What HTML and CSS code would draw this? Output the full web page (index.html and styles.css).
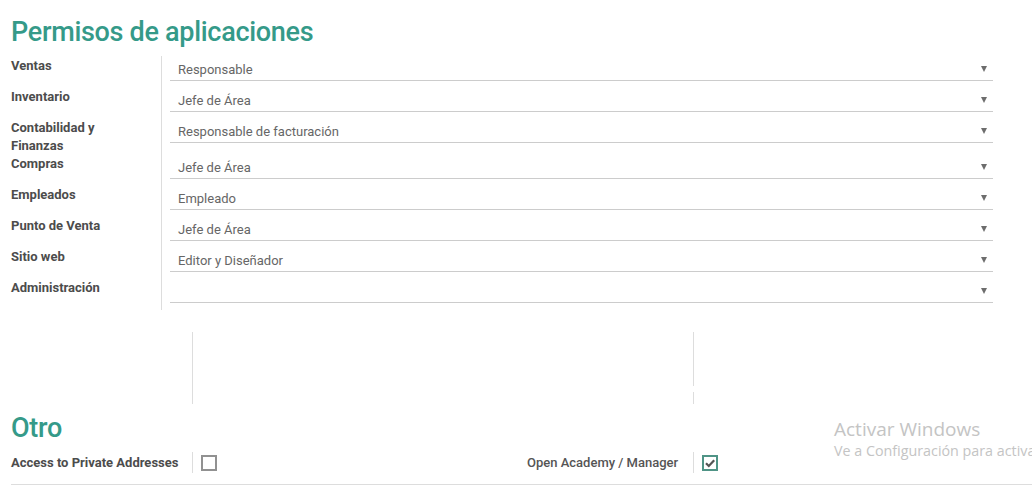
FILE: index.html
```html
<!DOCTYPE html>
<html lang="es">
<head>
<meta charset="utf-8">
<title>Permisos de aplicaciones</title>
<link rel="stylesheet" href="styles.css">
</head>
<body>
<div class="sheet">
  <h1 class="section-title">Permisos de aplicaciones</h1>
  <div class="perm-table">
    <div class="perm-label">Ventas</div>
    <div class="perm-field"><div class="select">Responsable</div></div>
    <div class="perm-label">Inventario</div>
    <div class="perm-field"><div class="select">Jefe de Área</div></div>
    <div class="perm-label">Contabilidad y Finanzas</div>
    <div class="perm-field"><div class="select">Responsable de facturación</div></div>
    <div class="perm-label">Compras</div>
    <div class="perm-field"><div class="select">Jefe de Área</div></div>
    <div class="perm-label">Empleados</div>
    <div class="perm-field"><div class="select">Empleado</div></div>
    <div class="perm-label">Punto de Venta</div>
    <div class="perm-field"><div class="select">Jefe de Área</div></div>
    <div class="perm-label">Sitio web</div>
    <div class="perm-field"><div class="select">Editor y Diseñador</div></div>
    <div class="perm-label">Administración</div>
    <div class="perm-field"><div class="select"></div></div>
  </div>

  <div class="groups empty-groups">
    <div class="group group-left">
      <div class="g-label tall"></div>
    </div>
    <div class="group group-right">
      <div class="g-label upper"></div>
      <div class="g-label lower"></div>
    </div>
  </div>

  <h1 class="section-title other">Otro</h1>
  <div class="groups">
    <div class="group group-left">
      <div class="g-label">Access to Private Addresses</div>
      <div class="g-field"><span class="checkbox"></span></div>
    </div>
    <div class="group group-right">
      <div class="g-label">Open Academy / Manager</div>
      <div class="g-field">
        <span class="checkbox checked">
          <svg viewBox="0 0 12 12" width="12" height="12"><path d="M2 6.2 L4.8 9 L10.2 3.2" fill="none" stroke="#555" stroke-width="2.2"/></svg>
        </span>
      </div>
    </div>
  </div>
  <div class="bottom-rule"></div>
</div>

<div class="watermark">
  <div class="wm-title">Activar Windows</div>
  <div class="wm-sub">Ve a Configuración para activa</div>
</div>
</body>
</html>
```

FILE: styles.css
```css
html, body {
  margin: 0;
  padding: 0;
  background: #ffffff;
  overflow: hidden;
}

body {
  font-family: Roboto, "Noto Sans", "Liberation Sans", sans-serif;
  font-size: 13px;
  color: #4c4c4c;
  width: 1032px;
  height: 487px;
  position: relative;
}

.sheet {
  padding-left: 11px;
}

.section-title {
  margin: 16px 0 8px 0;
  font-size: 27px;
  line-height: 32px;
  font-weight: 500;
  color: #359a89;
  letter-spacing: -0.3px;
}

.perm-table {
  display: grid;
  grid-template-columns: 151px 831px;
}

.perm-label {
  box-sizing: border-box;
  border-right: 1px solid #dddddd;
  padding: 1px 22px 0 0;
  margin-bottom: -1px;
  font-weight: 700;
  line-height: 18px;
  color: #4c4c4c;
}

.perm-field {
  padding: 0 0 6px 8px;
}

.select {
  position: relative;
  box-sizing: border-box;
  height: 25px;
  border-bottom: 1px solid #cccccc;
  padding: 6px 0 0 8px;
  line-height: 16px;
  color: #666666;
}

.select::after {
  content: "";
  position: absolute;
  right: 6px;
  top: 10px;
  border-left: 3.5px solid transparent;
  border-right: 3.5px solid transparent;
  border-top: 6px solid #6d6d6d;
}

.groups {
  display: grid;
  grid-template-columns: 516px 1fr;
}

.group {
  display: grid;
  align-content: start;
}

.group-left {
  grid-template-columns: 182px 1fr;
}

.group-right {
  grid-template-columns: 167px 1fr;
}

.empty-groups {
  margin-top: 23px;
}

.g-label {
  box-sizing: border-box;
  border-right: 1px solid #dddddd;
  padding-right: 16px;
  font-weight: 700;
  line-height: 21px;
  color: #4c4c4c;
  white-space: nowrap;
}

.group-right .g-label {
  color: #555555;
  font-weight: 500;
}

.g-label.tall {
  height: 72px;
}

.g-label.upper {
  height: 54px;
  grid-column: 1;
}

.g-label.lower {
  height: 12px;
  margin-top: 6px;
  grid-column: 1;
}

.section-title.other {
  margin-top: 8px;
  margin-bottom: 8px;
}

.g-field {
  padding-left: 8px;
  padding-top: 3px;
}

.checkbox {
  display: flex;
  align-items: center;
  justify-content: center;
  box-sizing: border-box;
  width: 16px;
  height: 16px;
  border: 2px solid #919191;
  background: #ffffff;
}

.checkbox.checked {
  border-color: #4f9486;
}

.bottom-rule {
  margin-top: 11px;
  border-top: 1px solid #dddddd;
}

.watermark {
  position: absolute;
  left: 834px;
  top: 416px;
  font-family: "Open Sans", "Noto Sans", sans-serif;
  color: #c4c4c4;
  white-space: nowrap;
  pointer-events: none;
}

.wm-title {
  font-size: 19px;
  line-height: 26px;
}

.wm-sub {
  font-size: 14.3px;
  line-height: 18px;
}
```
